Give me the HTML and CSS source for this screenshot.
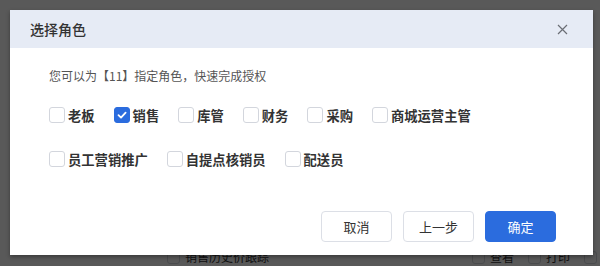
FILE: index.html
```html
<!DOCTYPE html>
<html lang="zh-CN">
<head>
    <meta charset="UTF-8">
    <meta name="viewport" content="width=device-width, initial-scale=1.0">
    <title>选择角色</title>
    <link rel="stylesheet" href="styles.css">
</head>
<body>

    <!-- page behind the dialog -->
    <div class="page">
        <div class="page-row">
            <label class="page-check"><span class="box"></span>销售历史价跟踪</label>
            <label class="page-check right"><span class="box"></span>查看</label>
            <label class="page-check"><span class="box"></span>打印</label>
            <label class="page-check"><span class="box"></span></label>
        </div>
    </div>
    <div class="mask"></div>

    <div class="dialog">
        <div class="dialog-header">
            <span class="dialog-title">选择角色</span>
            <svg class="close" width="11" height="11" viewBox="0 0 11 11">
                <path d="M1 1L10 10M10 1L1 10" stroke="#6b6e75" stroke-width="1.2" fill="none"/>
            </svg>
        </div>

        <div class="dialog-body">
            <p class="tip">您可以为【11】指定角色，快速完成授权</p>

            <div class="role-row">
                <label class="role"><span class="box"></span>老板</label>
                <label class="role"><span class="box checked"><svg width="12" height="12" viewBox="0 0 12 12"><path d="M2.5 6.2L5 8.6L9.6 3.6" stroke="#fff" stroke-width="1.8" fill="none" stroke-linecap="round" stroke-linejoin="round"/></svg></span>销售</label>
                <label class="role"><span class="box"></span>库管</label>
                <label class="role"><span class="box"></span>财务</label>
                <label class="role"><span class="box"></span>采购</label>
                <label class="role"><span class="box"></span>商城运营主管</label>
            </div>

            <div class="role-row second">
                <label class="role"><span class="box"></span>员工营销推广</label>
                <label class="role"><span class="box"></span>自提点核销员</label>
                <label class="role"><span class="box"></span>配送员</label>
            </div>
        </div>

        <div class="dialog-footer">
            <button class="btn">取消</button>
            <button class="btn">上一步</button>
            <button class="btn primary">确定</button>
        </div>
    </div>

</body>
</html>
```

FILE: styles.css
```css
body {
    margin: 0;
    width: 600px;
    height: 266px;
    overflow: hidden;
    font-family: "Noto Sans CJK SC", "Noto Sans", sans-serif;
    background-color: #fff;
}

.page {
    height: 266px;
    padding-top: 249px;
    box-sizing: border-box;
}

.page-row {
    display: flex;
    align-items: center;
    height: 16px;
    padding-left: 167px;
    font-size: 12px;
    line-height: 16px;
    color: #333;
    white-space: nowrap;
}

.page-check {
    display: flex;
    align-items: center;
    flex-shrink: 0;
    margin-right: 14px;
}

.page-check.right {
    margin-left: 189px;
}

.page-check .box {
    width: 13px;
    height: 13px;
    margin-right: 5px;
}

.mask {
    position: absolute;
    top: 0;
    left: 0;
    width: 600px;
    height: 266px;
    background-color: rgba(0, 0, 0, 0.65);
}

.dialog {
    position: absolute;
    top: 10px;
    left: 10px;
    width: 583px;
    height: 245px;
    background-color: #fff;
    box-shadow: 0 2px 4px rgba(0, 0, 0, 0.35);
    display: flex;
    flex-direction: column;
}

.dialog-header {
    height: 38px;
    background-color: #e6ebf5;
    display: flex;
    align-items: center;
    justify-content: space-between;
    padding: 0 25px 0 20px;
}

.dialog-title {
    font-size: 14px;
    color: #333;
    font-weight: 500;
}

.dialog-body {
    padding: 18px 39px 0;
}

.tip {
    margin: 0;
    font-size: 12px;
    line-height: 20px;
    color: #555;
}

.role-row {
    display: flex;
    margin-top: 19px;
}

.role-row.second {
    margin-top: 24px;
}

.role {
    display: flex;
    align-items: center;
    height: 20px;
    margin-right: 19px;
    font-size: 13.3px;
    font-weight: bold;
    color: #333;
}

.box {
    width: 16px;
    height: 16px;
    margin-right: 3px;
    border: 1px solid #d3d6dd;
    border-radius: 3px;
    box-sizing: border-box;
    background-color: #fff;
    display: flex;
    align-items: center;
    justify-content: center;
}

.box.checked {
    background-color: #2b6cde;
    border-color: #2b6cde;
}

.dialog-footer {
    margin-top: auto;
    display: flex;
    justify-content: flex-end;
    gap: 11px;
    padding: 0 37px 13px 0;
}

.btn {
    width: 71px;
    height: 31px;
    border: 1px solid #dcdfe6;
    border-radius: 4px;
    background-color: #fff;
    font-family: inherit;
    font-size: 13px;
    color: #333;
    cursor: pointer;
}

.btn.primary {
    background-color: #2b6cde;
    border-color: #2b6cde;
    color: #fff;
}
```
